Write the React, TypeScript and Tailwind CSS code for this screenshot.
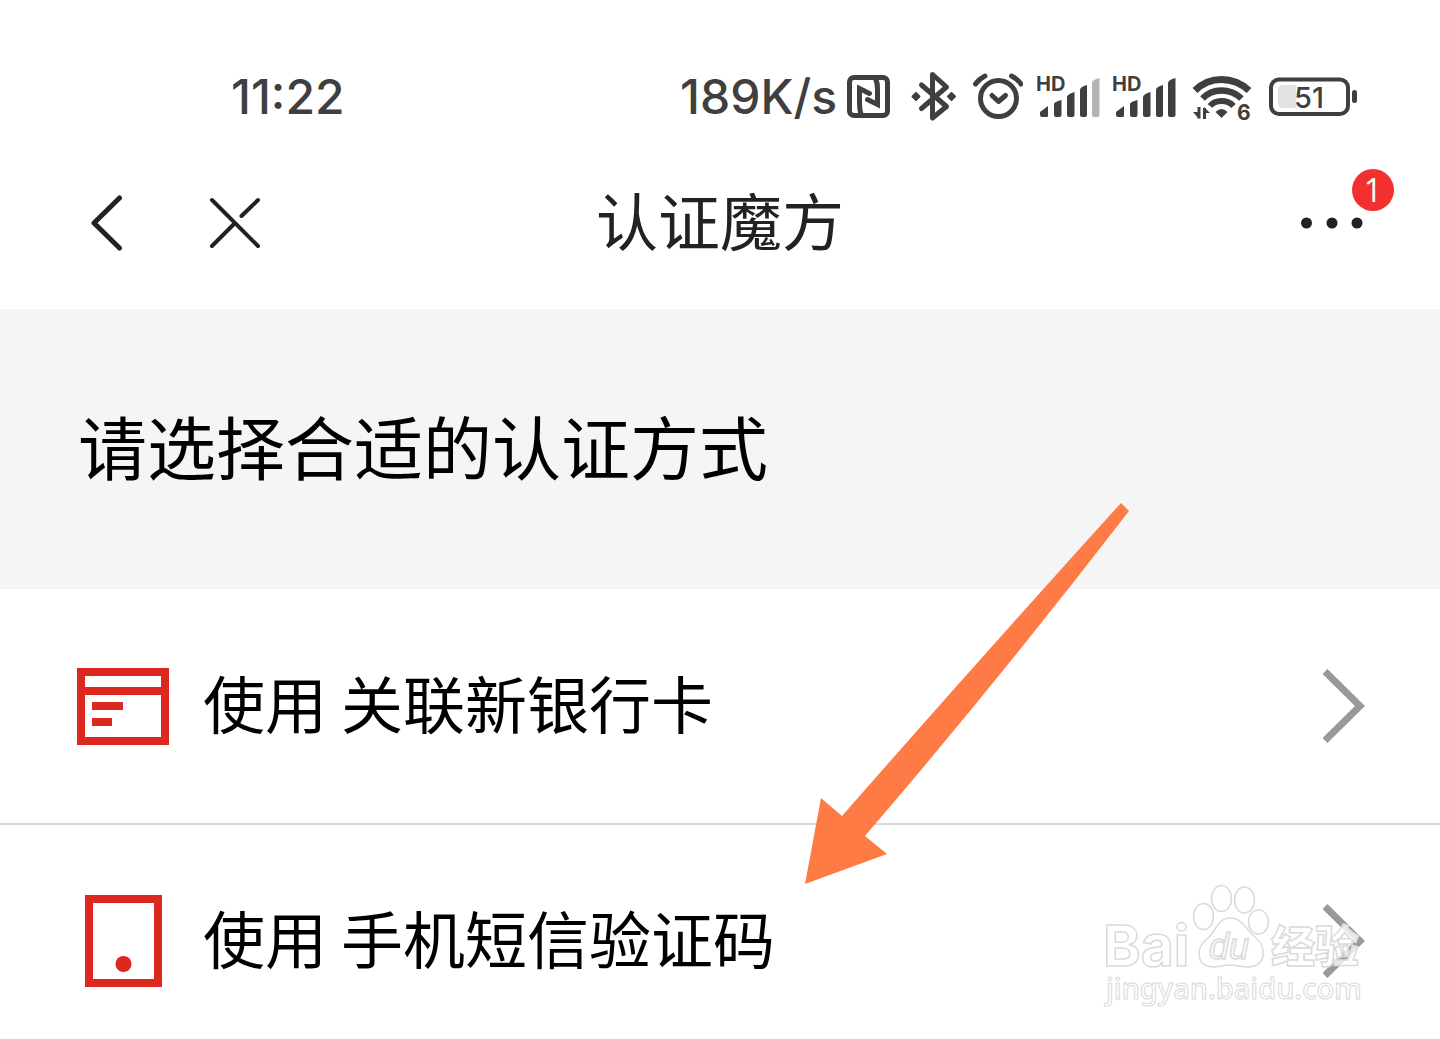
import type { ReactNode } from "react";

const NfcIcon = () => (
    <svg width="44" height="50" viewBox="0 0 44 50" fill="none" stroke="#3f3f3f" aria-hidden="true">
        <rect x="2.5" y="5.5" width="38" height="38" rx="4.5" strokeWidth="5" />
        <path d="M14.5 43C12.500 39 12.500 36 12.500 30V16.500L22.500 21.500" strokeWidth="5" strokeLinecap="round" />
        <path d="M28 6C30.500 10 30.500 13 30.500 19V32.500L20.500 27.500" strokeWidth="5" strokeLinecap="round" />
    </svg>
);

const BluetoothIcon = () => (
    <svg width="46" height="50" viewBox="0 0 46 50" fill="none" stroke="#3f3f3f" aria-hidden="true">
        <path d="M10.500 13L35.500 34.500L21.500 46V2.500L35.500 15L10.500 36.500" strokeWidth="5" strokeLinecap="round" strokeLinejoin="round" />
        <path d="M5 21L8.500 24.500L5 28L1.500 24.500ZM40.500 21L44 24.500L40.500 28L37 24.500Z" fill="#3f3f3f" strokeWidth="2" strokeLinejoin="round" />
    </svg>
);

const AlarmIcon = () => (
    <svg width="50" height="50" viewBox="0 0 50 50" fill="none" stroke="#3f3f3f" aria-hidden="true">
        <circle cx="25.500" cy="26.500" r="18" strokeWidth="5" />
        <path d="M19 23.500L25.500 29.500L32.500 23.500" strokeWidth="5" strokeLinecap="round" strokeLinejoin="round" />
        <path d="M2.500 12C5 8.500 8 6 12 4M38.500 4C42.500 6 45.500 8.500 48 12" strokeWidth="5" strokeLinecap="round" />
    </svg>
);

const SignalIcon = ({ lastBar }: { lastBar: string }) => (
    <svg width="63" height="50" viewBox="0 0 63 50" fill="#3f3f3f" aria-hidden="true">
        <text x="-1" y="19" fontFamily="Inter, sans-serif" fontSize="20" fontWeight="700">HD</text>
        <path d="M3 40L11 34V44Q11 45 10 45H5Q3 45 3 43Z" />
        <path d="M17 32Q17 30 24.500 28V43Q24.500 45 22.500 45H19Q17 45 17 43Z" />
        <path d="M30 25Q30 22.500 37.500 20V43Q37.500 45 35.500 45H32Q30 45 30 43Z" />
        <path d="M43 18Q43 15 50 13V43Q50 45 48 45H45Q43 45 43 43Z" />
        <path d="M55 11Q55 8 62.500 6V43Q62.500 45 60.500 45H57Q55 45 55 43Z" fill={lastBar} />
    </svg>
);

const WifiIcon = () => (
    <svg className="overflow-visible" width="60" height="50" viewBox="0 0 60 50" fill="none" stroke="#3f3f3f" aria-hidden="true">
        <path d="M2 18.500Q13 7.500 28.500 7.500T56 18.500" strokeWidth="7" />
        <path d="M9.500 26.500Q17 18.500 28.500 18.500T48.500 26.500" strokeWidth="6.500" />
        <path d="M17 34Q21 29 28.500 29T40.500 34" strokeWidth="6" />
        <path d="M22.500 40Q28.500 34 34.500 40L28.500 46Z" fill="#3f3f3f" stroke="none" />
        <path d="M6 35V46.500M11.500 47V36" strokeWidth="3" />
        <path d="M6 47L0 40H6ZM11 35L17 41H11Z" fill="#3f3f3f" stroke="none" />
        <text x="44" y="48" fill="#3f3f3f" stroke="none" fontFamily="Inter, sans-serif" fontSize="21" fontWeight="700">6</text>
    </svg>
);

const BatteryIcon = () => (
    <svg width="88" height="50" viewBox="0 0 88 50" aria-label="51%">
        <rect x="2" y="7.500" width="77" height="34.500" rx="8" fill="none" stroke="#3f3f3f" strokeWidth="4" />
        <path d="M14 13H27V36H14Q9 36 9 31V18Q9 13 14 13Z" fill="#e2e2e2" />
        <rect x="83" y="18" width="5" height="13" rx="2.500" fill="#3f3f3f" />
        <text x="25" y="36" fill="#3f3f3f" fontFamily="Inter, sans-serif" fontSize="29" fontWeight="500">51</text>
    </svg>
);

const CardIcon = () => (
    <svg width="92" height="92" viewBox="0 0 92 92" fill="#dc281e" aria-hidden="true">
        <path fillRule="evenodd" d="M0 8H92V85H0ZM8 16V27H84V16ZM8 35V77H84V35Z" />
        <path d="M15 42H46V50H15ZM15 58H35V66H15Z" />
    </svg>
);

const PhoneIcon = () => (
    <svg width="92" height="92" viewBox="0 0 92 92" fill="#dc281e" aria-hidden="true">
        <path fillRule="evenodd" d="M8 0H85V92H8ZM16 8V84H77V8Z" />
        <circle cx="46.500" cy="69" r="8" />
    </svg>
);

const Chevron = () => (
    <svg width="42" height="74" viewBox="0 0 42 74" fill="none" stroke="#999" strokeWidth="7" aria-hidden="true">
        <path d="M2 2.500L37 37L2 71.500" />
    </svg>
);

const Watermark = () => (
    <svg className="absolute right-[70px] bottom-[29px]" width="270" height="130" viewBox="0 0 270 130" fill="#fff" fillOpacity="0.8" stroke="#dadada" strokeWidth="1.500">
        <text x="3" y="86" fontFamily="Inter, sans-serif" fontSize="57" fontWeight="700">Bai</text>
        <ellipse cx="103.500" cy="36.500" rx="10" ry="13" />
        <ellipse cx="121.500" cy="18.500" rx="10" ry="13" />
        <ellipse cx="144.500" cy="20" rx="10" ry="13" />
        <ellipse cx="158.500" cy="42" rx="10" ry="12" />
        <path d="M130 38C143 38 146 50 155 57C167 67 167 86 148 87C140 87 137 85 130 85C123 85 120 87 112 87C96 86 95 68 108 58C116 51 118 38 130 38Z" />
        <text x="109" y="79" fontFamily="'Liberation Sans', sans-serif" fontSize="36" fontStyle="italic">du</text>
        <text x="171" y="83" fontFamily="'Noto Sans CJK SC', sans-serif" fontSize="44" fontWeight="900">经验</text>
        <text x="6" y="119" fontFamily="'Noto Sans', sans-serif" fontSize="29" fontWeight="500" strokeWidth="1">jingyan.baidu.com</text>
    </svg>
);

const MethodRow = ({ icon, label, className }: { icon: ReactNode; label: string; className: string }) => (
    <button className={`w-full flex items-center pl-[77px] pr-[75px] text-left ${className}`}>
        {icon}
        <span className="ml-[34px] pb-2 flex-1 text-[62px] leading-[84px] text-black">{label}</span>
        <Chevron />
    </button>
);

const App = () => {
    return (
        <div className="relative bg-white overflow-hidden font-['Noto_Sans_CJK_SC',sans-serif]">
            {/* STATUS BAR */}
            <div className="flex items-center justify-between pt-[72px] pl-[231px] pr-[83px] font-['Inter',sans-serif] text-[48px] leading-[50px] font-medium text-[#3f3f3f]">
                <span>11:22</span>
                <div className="flex items-center">
                    <span className="mr-2.5">189K/s</span>
                    <NfcIcon />
                    <div className="flex items-center gap-4 ml-5">
                        <BluetoothIcon />
                        <AlarmIcon />
                        <div className="flex gap-[13px] -ml-0.5 mr-px">
                            <SignalIcon lastBar="#b3b3b3" />
                            <SignalIcon lastBar="#3f3f3f" />
                        </div>
                        <WifiIcon />
                        <BatteryIcon />
                    </div>
                </div>
            </div>

            {/* NAV */}
            <header className="grid grid-cols-3 items-center mt-[50px] pb-[35px] px-[76px]">
                <div className="flex items-center gap-[86px] pl-3.5">
                    <button aria-label="返回">
                        <svg width="33" height="56" viewBox="0 0 33 56" fill="none" stroke="#222" strokeWidth="5" strokeLinecap="round" strokeLinejoin="round">
                            <path d="M29.500 3L4 28L29.500 53" />
                        </svg>
                    </button>
                    <button aria-label="关闭">
                        <svg width="52" height="52" viewBox="0 0 52 52" fill="none" stroke="#222" strokeWidth="4" strokeLinecap="round">
                            <path d="M3 3L49 49M49 3L32.500 19M25 27L3 49" />
                        </svg>
                    </button>
                </div>
                <h1 className="pb-2 text-center text-[62px] leading-[94px] text-[#222]">认证魔方</h1>
                <button aria-label="更多" className="relative justify-self-end">
                    <svg width="64" height="52" viewBox="0 0 64 52" fill="#222">
                        <circle cx="6.500" cy="26" r="5.500" />
                        <circle cx="32" cy="26" r="5.500" />
                        <circle cx="57" cy="26" r="5.500" />
                    </svg>
                    <span className="absolute -top-7 -right-[30px] size-[42px] rounded-full bg-[#f23030] text-center font-['Open_Sans',sans-serif] text-[32px] leading-[42px] text-white">1</span>
                </button>
            </header>

            <h2 className="bg-[#f5f5f5] pl-[78px] pb-2 text-[69px] leading-[272px] text-black">请选择合适的认证方式</h2>

            {/* METHODS */}
            <MethodRow icon={<CardIcon />} label="使用 关联新银行卡" className="py-[71px]" />
            <MethodRow icon={<PhoneIcon />} label="使用 手机短信验证码" className="border-t-2 border-[#d9d9d9] pt-[70px] pb-[52px]" />

            <Watermark />

            {/* POINTER */}
            <svg className="absolute left-[804px] top-[502px]" width="326" height="384" viewBox="0 0 326 384" fill="#ff7b46" aria-hidden="true">
                <path d="M1 382L17 296L38 314Q180 152 317 1L325 9Q195 178 61 334L83 352Z" />
            </svg>
        </div>
    );
};

export default App;
